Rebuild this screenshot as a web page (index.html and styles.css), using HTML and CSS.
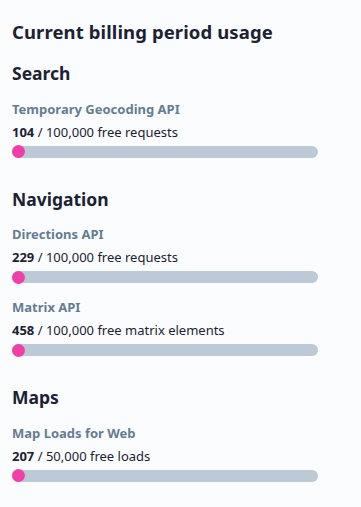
FILE: index.html
```html
<!DOCTYPE html>
<html lang="en">
<head>
    <meta charset="UTF-8">
    <meta name="viewport" content="width=device-width, initial-scale=1.0">
    <title>Usage</title>
    <link rel="stylesheet" href="styles.css">
</head>
<body>
    <div class="usage">
        <h1 class="usage-title">Current billing period usage</h1>

        <section class="group">
            <h2>Search</h2>
            <div class="meter">
                <div class="meter-name">Temporary Geocoding API</div>
                <div class="meter-count"><b>104</b> / 100,000 free requests</div>
                <div class="bar"><div class="bar-fill" style="width: 0.104%"></div></div>
            </div>
        </section>

        <section class="group">
            <h2>Navigation</h2>
            <div class="meter">
                <div class="meter-name">Directions API</div>
                <div class="meter-count"><b>229</b> / 100,000 free requests</div>
                <div class="bar"><div class="bar-fill" style="width: 0.229%"></div></div>
            </div>
            <div class="meter">
                <div class="meter-name">Matrix API</div>
                <div class="meter-count"><b>458</b> / 100,000 free matrix elements</div>
                <div class="bar"><div class="bar-fill" style="width: 0.458%"></div></div>
            </div>
        </section>

        <section class="group">
            <h2>Maps</h2>
            <div class="meter">
                <div class="meter-name">Map Loads for Web</div>
                <div class="meter-count"><b>207</b> / 50,000 free loads</div>
                <div class="bar"><div class="bar-fill" style="width: 0.414%"></div></div>
            </div>
        </section>
    </div>
</body>
</html>
```

FILE: styles.css
```css
body {
    font-family: "Noto Sans", "Open Sans", Arial, sans-serif;
    margin: 0;
    padding: 0;
    background-color: #fbfcfe;
    color: #1b2233;
}
.usage {
    padding: 19px 43px 0 12px;
}
.usage-title {
    font-size: 18.5px;
    font-weight: 700;
    margin: 0 0 16px 0;
    line-height: 26px;
    letter-spacing: 0.1px;
}
.group {
    margin-bottom: 29px;
}
.group h2 {
    font-size: 17.5px;
    font-weight: 700;
    margin: 0 0 13.5px 0;
    line-height: 24px;
}
.meter {
    margin-bottom: 14px;
}
.meter-name {
    font-size: 13px;
    font-weight: 700;
    color: #647d93;
    line-height: 20px;
}
.meter-count {
    font-size: 13px;
    line-height: 20px;
    color: #1b2233;
    margin: 3px 0 4px 0;
}
.meter-count b {
    font-weight: 700;
}
.bar {
    position: relative;
    height: 12px;
    border-radius: 6px;
    background-color: #bccad7;
}
.bar-fill {
    position: absolute;
    left: 0;
    top: -0.5px;
    min-width: 13px;
    height: 13px;
    border-radius: 7px;
    background-color: #f040a8;
}
```
